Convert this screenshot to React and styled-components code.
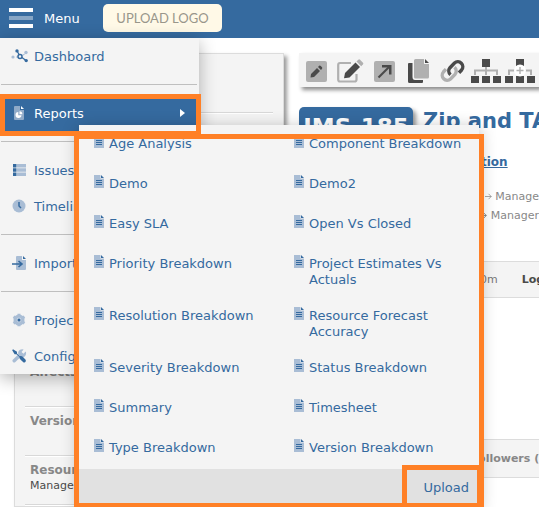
import React from 'react';
import styled, { createGlobalStyle, css } from 'styled-components';

const BLUE = '#356a9f';
const PALE = '#a9bdd5';
const DARK = '#4a4a4a';
const GRAY = '#b0b0b0';
const ORANGE = '#ff8026';
const PANEL = '#f4f4f4';

const GlobalStyle = createGlobalStyle`
  *, *::before, *::after { box-sizing: border-box; }
  body { margin: 0; background: #fff; }
  body, button { font-family: "DejaVu Sans", Verdana, sans-serif; font-size: 13px; }
  a { color: inherit; text-decoration: none; }
  ul, h1, h2, p { margin: 0; padding: 0; list-style: none; }
`;

const Page = styled.div`
  position: relative;
  height: 100vh;
  overflow: hidden;
`;

const Header = styled.header`
  display: flex;
  align-items: center;
  height: 38px;
  padding: 0 9px 2px;
  background: ${BLUE};
`;

const MenuButton = styled.button`
  display: flex;
  align-items: center;
  gap: 11px;
  width: 94px;
  padding: 0;
  border: 0;
  background: none;
  color: #fff;
  svg { display: block; }
`;

const LogoButton = styled.button`
  height: 28px;
  width: 119px;
  padding: 0;
  border: 0;
  border-radius: 5px;
  background: #fff9e7;
  color: #99968b;
  font-family: "Lato", sans-serif;
  font-size: 13px;
  white-space: nowrap;
`;

/* page content */

const Content = styled.main`
  display: grid;
  grid-template-columns: 270px minmax(0, 1fr);
  column-gap: 15px;
  height: calc(100vh - 38px);
  padding: 15px 0 0 14px;
`;

const Details = styled.aside`
  display: flex;
  flex-direction: column;
  padding: 0 10px;
  border: 1px solid #dcdcdc;
  background: ${PANEL};
  box-shadow: 3px 3px 4px rgba(0, 0, 0, 0.4);
`;

const DetailRow = styled.section`
  flex: none;
  height: ${(p) => (p.$tall ? 245 : p.$first ? 59 : 49)}px;
  padding: 6px 5px 0;
  border-bottom: 1px solid #d8d8d8;
  box-shadow: 0 1px #fff;
`;

const DetailLabel = styled.h2`
  color: #888;
  font-size: 12px;
  line-height: 16px;
`;

const DetailValue = styled.p`
  color: ${DARK};
  font-size: 11px;
  line-height: 16px;
`;

const Issue = styled.div`
  display: flex;
  flex-direction: column;
  min-width: 0;
`;

const Toolbar = styled.div`
  display: flex;
  align-items: center;
  height: 34px;
  flex: none;
  background: ${PANEL};
  box-shadow: 3px 3px 4px rgba(0, 0, 0, 0.45);
`;

const ToolButton = styled.button`
  display: flex;
  flex: none;
  justify-content: center;
  width: 34px;
  padding: 2px 0 0;
  border: 0;
  background: none;
`;

const TitleRow = styled.div`
  display: flex;
  gap: 10px;
  height: 47px;
  margin-top: 20px;
  white-space: nowrap;
`;

const IssueKey = styled.span`
  width: 114px;
  height: 32px;
  flex: none;
  border-radius: 5px;
  background: ${BLUE};
  box-shadow: 3px 3px 4px rgba(0, 0, 0, 0.4);
  color: #fff;
  font-size: 23px;
  font-weight: bold;
  line-height: 41px;
  text-align: center;
`;

const Title = styled.h1`
  color: ${BLUE};
  font-size: 21px;
  line-height: 29px;
`;

const Trail = styled.div`
  display: flex;
  flex-direction: column;
  white-space: nowrap;
`;

const SectionLink = styled.a`
  margin-bottom: 17px;
  padding-left: 182px;
  color: ${BLUE};
  font-size: 12px;
  font-weight: bold;
  line-height: 16px;
  text-decoration: underline;
`;

const Crumb = styled.p`
  display: flex;
  align-items: center;
  gap: 3px;
  padding-left: ${(p) => p.$inset}px;
  color: #888;
  font-size: 11px;
  line-height: 19px;
`;

const Band = styled.div`
  display: flex;
  align-items: center;
  flex: none;
  gap: 24px;
  height: ${(p) => p.$height}px;
  margin-top: ${(p) => p.$gap}px;
  padding-left: ${(p) => p.$inset}px;
  border: solid #dcdcdc;
  border-width: 1px 0;
  background: ${PANEL};
  color: ${(p) => p.$color};
  font-size: 11px;
  white-space: nowrap;
  strong { color: ${(p) => p.$strong}; }
`;

/* menus */

const floating = css`
  position: absolute;
  background: ${PANEL};
  box-shadow: 0 4px 16px rgba(0, 0, 0, 0.3);
`;

const Menu = styled.nav`
  ${floating}
  top: 38px;
  left: 0;
  width: 199px;
`;

const MenuItem = styled.a`
  display: grid;
  grid-template-columns: 18px 1fr 16px;
  align-items: center;
  column-gap: 5px;
  height: 36px;
  margin: 0 3px 0 5px;
  padding-left: 6px;
  background: ${(p) => (p.$active ? BLUE : 'transparent')};
  color: ${(p) => (p.$active ? '#fff' : BLUE)};
  svg { display: block; }
`;

const Divider = styled.hr`
  height: 1px;
  margin: 10px 2px 10px 1px;
  border: 0;
  background: #bfbfbf;
`;

const Submenu = styled.div`
  ${floating}
  top: 125px;
  left: 79px;
  width: 400px;
`;

const ReportsClip = styled.div`
  overflow: hidden;
`;

const Reports = styled.ul`
  display: grid;
  grid-template-columns: 1fr 1fr;
  margin-top: -2px;
  padding-bottom: 2px;
`;

const Report = styled.a`
  display: flex;
  gap: 5px;
  min-height: 40px;
  padding: 11px 10px 7px 15px;
  color: ${BLUE};
  line-height: 16px;
  svg { flex: none; }
  span { padding: 2px 0 0; }
`;

const Footer = styled.div`
  display: flex;
  justify-content: flex-end;
  height: 38px;
  padding: 0 10px;
  background: #e1e1e1;
  color: ${BLUE};
  line-height: 37px;
`;

const Highlight = styled.div`
  position: absolute;
  pointer-events: none;
  border: 5px solid ${ORANGE};
  top: ${(p) => p.$top}px;
  left: ${(p) => p.$left}px;
  width: ${(p) => p.$width}px;
  height: ${(p) => p.$height}px;
`;

/* icons */

const Svg = ({ w, h, box, children }) => (
  <svg width={w} height={h} viewBox={box || `0 0 ${w} ${h}`} fill="none" aria-hidden="true">{children}</svg>
);

const Hamburger = () => (
  <Svg w={24} h={22}>
    <rect y="1" width="24" height="4" fill="#fff" />
    <rect y="9" width="24" height="4" fill="#86a5c5" />
    <rect y="17" width="24" height="4" fill="#fff" />
  </Svg>
);

const FileIcon = () => (
  <Svg w={10} h={14}>
    <path d="M0 1H6.5V4.5H10V14H0Z" fill={PALE} />
    <path d="M7 1L10 4H7Z" fill={BLUE} />
    <path d="M2 6H8V7H2ZM2 8H8V9H2ZM2 10H8V11H2Z" fill={BLUE} />
  </Svg>
);

const NodesIcon = () => (
  <Svg w={18} h={14}>
    <g fill={PALE}>
      <circle cx="2" cy="8" r="1.6" /><circle cx="15" cy="3.5" r="1.7" />
      <path d="M5 7.5H7V8.5H5ZM11 6L13.5 4.5L14 5.3L12 6.8Z" />
    </g>
    <path d="M6 2L9 7L15 11.5" stroke={BLUE} strokeWidth="1.2" />
    <circle cx="6" cy="1.9" r="1.7" fill={BLUE} /><circle cx="15.2" cy="11.6" r="1.7" fill={BLUE} />
    <circle cx="9" cy="7.5" r="2" stroke={BLUE} strokeWidth="1.5" fill={PANEL} />
  </Svg>
);

const ReportIcon = () => (
  <Svg w={18} h={14}>
    <path d="M3 1Q3 0 4 0H9V4H13V13Q13 14 12 14H4Q3 14 3 13Z" fill="#8faac8" />
    <path d="M10 0L13 3H10Z" fill="#fff" />
    <path d="M7.3 6A3 3 0 1 0 10.5 9.3H7.3ZM8.5 5.3V8.2H11.4A3 3 0 0 0 8.5 5.3Z" fill="#fff" />
  </Svg>
);

const ListIcon = () => (
  <Svg w={18} h={14}>
    <path d="M6 1H15V4.5H6ZM6 5.3H15V8.7H6ZM6 9.5H15V13H6Z" fill={PALE} />
    <path d="M2 1H5.5V4.5H2ZM2 5.3H5.5V8.7H2ZM2 9.5H5.5V13H2Z" fill={BLUE} />
  </Svg>
);

const ClockIcon = () => (
  <Svg w={18} h={14}>
    <circle cx="8" cy="7" r="6.5" fill={PALE} />
    <path d="M8 3V7L10 9" stroke={BLUE} strokeWidth="1.5" />
  </Svg>
);

const ImportIcon = () => (
  <Svg w={18} h={14}>
    <path d="M5 1Q5 0 6 0H11V4H15V13Q15 14 14 14H6Q5 14 5 13Z" fill={PALE} />
    <path d="M12 0L15 3H12Z" fill={BLUE} />
    <path d="M1 8H10M7.5 5L11 8L7.5 11" stroke={BLUE} strokeWidth="1.6" />
  </Svg>
);

const GearIcon = () => (
  <Svg w={18} h={14}>
    <circle cx="8" cy="7" r="4" stroke={PALE} strokeWidth="3" />
    <path d="M8 .7V13.3M2.5 3.8L13.5 10.2M13.5 3.8L2.5 10.2" stroke={PALE} strokeWidth="3" />
    <circle cx="8" cy="7" r="2.4" fill="#c5d3e3" /><circle cx="8" cy="7" r="1.5" fill={BLUE} />
  </Svg>
);

const ToolsIcon = () => (
  <Svg w={18} h={14}>
    <path d="M3.2 11.8L10 5.2" stroke={PALE} strokeWidth="3.4" strokeLinecap="round" />
    <path d="M14.7 2.6L12.4 4.8L10.5 3L12.6.6A4 4 0 1 0 14.7 2.6Z" fill={PALE} />
    <path d="M2 .3L6 2.8V4.6L8.6 7.2Q10.5 6.6 12 8L14.8 11Q15 13.6 12.6 13.6L9.4 10.6Q8.2 9.4 8.4 8L5.4 5.2H3.6L1.2 1.3Z" fill={BLUE} />
  </Svg>
);

const Caret = () => <Svg w={6} h={8}><path d="M0 0L5 4L0 8Z" fill="#fff" /></Svg>;

const CrumbArrow = () => (
  <Svg w={10} h={9}>
    <path d="M0 4.5H8.5M4.8 .8L8.5 4.5L4.8 8.2" stroke="#888" />
  </Svg>
);

const PencilBox = () => (
  <Svg w={21} h={21}>
    <rect width="21" height="21" rx="2" fill={GRAY} />
    <path d="M5 13L11 7L14 10L8 16L4.5 16.5ZM12 6L13.2 4.8Q14 4.2 14.8 5L16 6.2Q16.6 7 16 7.8L15 9Z" fill={DARK} />
  </Svg>
);

const EditBox = () => (
  <Svg w={27} h={24}>
    <path d="M14 4H3Q1.2 4 1.2 6V20.5Q1.2 22.5 3 22.5H17.5Q19.5 22.5 19.5 20.5V15" stroke={GRAY} strokeWidth="2.2" />
    <path d="M8 14L18.5 3.5L23 8L12.5 18.5L7 19.2Z" fill={DARK} />
    <path d="M19.5 2.5L21.3.7Q22.2 0 23 .7L26 3.7Q26.7 4.5 26 5.3L24.2 7.2Z" fill={GRAY} />
  </Svg>
);

const ArrowBox = () => (
  <Svg w={21} h={21}>
    <rect width="21" height="21" rx="2" fill={GRAY} />
    <path d="M4.5 16.5L15.5 5.5" stroke={DARK} strokeWidth="2.2" />
    <path d="M8 4H17.5V13.5H15V6.5H8Z" fill={DARK} />
  </Svg>
);

const CopyIcon = () => (
  <Svg w={21} h={24}>
    <path d="M0 5Q0 4 1 4H4.5V18Q4.5 21 7 21H15V23Q15 24 14 24H1.5Q0 24 0 22.5Z" fill={DARK} />
    <path d="M6 1.5Q6 0 7.5 0H16V5H21V18Q21 19.5 19.5 19.5H7.5Q6 19.5 6 18Z" fill={GRAY} />
    <path d="M17 0L21 4H17Z" fill={DARK} />
  </Svg>
);

const LinkIcon = () => (
  <Svg w={25} h={24}>
    <path d="M6 10.2L3.4 13A5 5 0 0 0 10.5 20L15 15.4A5 5 0 0 0 14.5 8.3" stroke={GRAY} strokeWidth="3.4" />
    <path d="M10.5 15.7A5 5 0 0 1 10 8.7L14.5 4A5 5 0 0 1 21.6 11L19 13.7" stroke={DARK} strokeWidth="3.4" />
  </Svg>
);

const TreeIcon = ({ plus }) => (
  <Svg w={30} h={24}>
    <path d="M15 8V16M4 16V11.5H26V16" stroke={GRAY} strokeWidth="2" />
    <path d="M11 0H19V8H11ZM0 17H8V24H0ZM11 17H19V24H11ZM22 17H30V24H22Z" fill={DARK} />
    {plus && <><circle cx="15" cy="11.5" r="6" fill="#fff" /><path d="M15 8V15M11.5 11.5H18.5" stroke={GRAY} strokeWidth="1.4" /></>}
  </Svg>
);

const MENU = [
  [{ label: 'Dashboard', icon: NodesIcon }],
  [{ label: 'Reports', icon: ReportIcon, active: true }],
  [{ label: 'Issues', icon: ListIcon }, { label: 'Timeline', icon: ClockIcon }],
  [{ label: 'Import', icon: ImportIcon }],
  [{ label: 'Project', icon: GearIcon }, { label: 'Configure', icon: ToolsIcon }],
];

const REPORTS = [
  'Age Analysis', 'Component Breakdown', 'Demo', 'Demo2', 'Easy SLA', 'Open Vs Closed',
  'Priority Breakdown', 'Project Estimates Vs Actuals', 'Resolution Breakdown',
  'Resource Forecast Accuracy', 'Severity Breakdown', 'Status Breakdown', 'Summary',
  'Timesheet', 'Type Breakdown', 'Version Breakdown',
];

const TOOLS = [
  ['Quick edit', PencilBox], ['Edit', EditBox], ['Move', ArrowBox],
  ['Copy', CopyIcon], ['Link', LinkIcon], ['Hierarchy', TreeIcon],
];

export default function App() {
  return (
    <Page>
      <GlobalStyle />
      <Header>
        <MenuButton><Hamburger />Menu</MenuButton>
        <LogoButton>UPLOAD LOGO</LogoButton>
      </Header>

      <Content>
        <Details>
          <DetailRow $first />
          <DetailRow $tall />
          <DetailRow><DetailLabel>Affects</DetailLabel></DetailRow>
          <DetailRow><DetailLabel>Version</DetailLabel></DetailRow>
          <DetailRow>
            <DetailLabel>Resources</DetailLabel>
            <DetailValue>Manager</DetailValue>
          </DetailRow>
        </Details>

        <Issue>
          <Toolbar>
            {TOOLS.map(([label, Icon]) => (
              <ToolButton key={label} aria-label={label}><Icon /></ToolButton>
            ))}
            <ToolButton aria-label="Add child"><TreeIcon plus /></ToolButton>
          </Toolbar>
          <TitleRow>
            <IssueKey>IMS-185</IssueKey>
            <Title>Zip and TA</Title>
          </TitleRow>
          <Trail>
            <SectionLink href="#section">tion</SectionLink>
            <Crumb $inset={186}><CrumbArrow />Manage</Crumb>
            <Crumb $inset={179}><CrumbArrow />Manager</Crumb>
          </Trail>
          <Band $height={37} $gap={36} $inset={181} $color="#777" $strong={DARK}>
            <span>0m</span><strong>Log</strong>
          </Band>
          <Band $height={39} $gap={141} $inset={172} $color="#888" $strong="#888">
            <strong>Followers (</strong>
          </Band>
        </Issue>
      </Content>

      <Menu aria-label="Main">
        {MENU.map((group, i) => (
          <React.Fragment key={group[0].label}>
            {i > 0 && <Divider />}
            {group.map(({ label, icon: Icon, active }) => (
              <MenuItem key={label} href="#menu" $active={active}>
                <Icon /><span>{label}</span>{active && <Caret />}
              </MenuItem>
            ))}
          </React.Fragment>
        ))}
      </Menu>

      <Submenu>
        <ReportsClip>
          <Reports>
            {REPORTS.map((name) => (
              <li key={name}><Report href="#report"><FileIcon /><span>{name}</span></Report></li>
            ))}
          </Reports>
        </ReportsClip>
        <Footer><a href="#upload">Upload</a></Footer>
      </Submenu>

      <Highlight $top={94} $left={0} $width={201} $height={42} />
      <Highlight $top={134} $left={74} $width={410} $height={374} />
      <Highlight $top={465} $left={402} $width={80} $height={43} />
    </Page>
  );
}
